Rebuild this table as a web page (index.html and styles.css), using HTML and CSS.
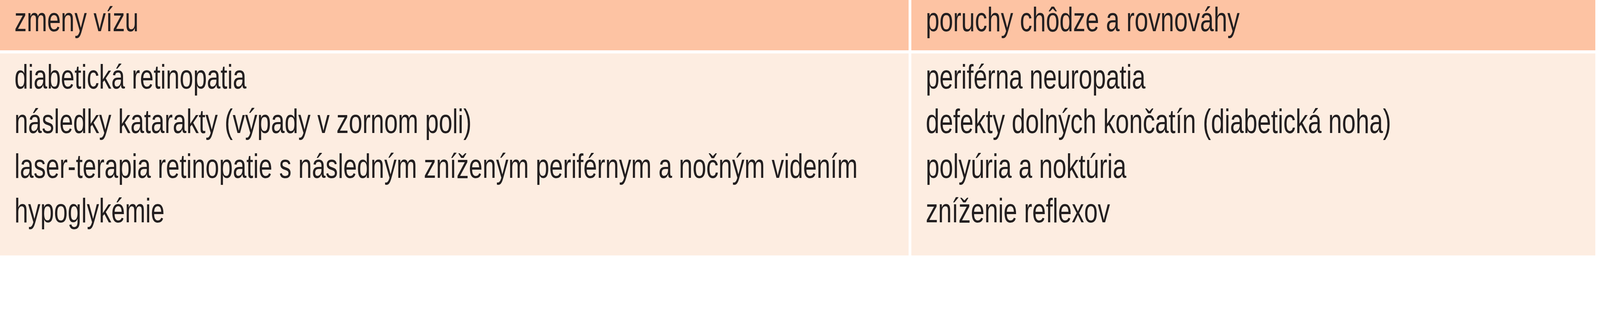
FILE: index.html
```html
<!DOCTYPE html>
<html lang="sk">
<head>
<meta charset="utf-8">
<title>Tabuľka</title>
<link rel="stylesheet" href="styles.css">
</head>
<body>
<div class="table">
  <div class="cell head"><span class="txt">zmeny vízu</span></div>
  <div class="cell head"><span class="txt">poruchy chôdze a rovnováhy</span></div>
  <div class="cell body">
    <div class="line"><span class="txt">diabetická retinopatia</span></div>
    <div class="line"><span class="txt">následky katarakty (výpady v zornom poli)</span></div>
    <div class="line"><span class="txt">laser-terapia retinopatie s následným zníženým periférnym a nočným videním</span></div>
    <div class="line"><span class="txt">hypoglykémie</span></div>
  </div>
  <div class="cell body">
    <div class="line"><span class="txt">periférna neuropatia</span></div>
    <div class="line"><span class="txt">defekty dolných končatín (diabetická noha)</span></div>
    <div class="line"><span class="txt">polyúria a noktúria</span></div>
    <div class="line"><span class="txt">zníženie reflexov</span></div>
  </div>
</div>
</body>
</html>
```

FILE: styles.css
```css
html, body {
  margin: 0;
  padding: 0;
  background: #ffffff;
}

.table {
  display: grid;
  grid-template-columns: 2834fr 2133fr;
  grid-template-rows: 129px 518px;
  column-gap: 0.16vw;
  row-gap: 8px;
  width: 99.7vw;
  font-family: "Liberation Sans", Arial, sans-serif;
  font-size: 88px;
  color: #231f20;
}

.cell {
  padding-left: 0.9vw;
  box-sizing: border-box;
  overflow: hidden;
  min-width: 0;
}

.head {
  background: #fdc3a3;
  line-height: 98px;
  padding-top: 1px;
}

.body {
  background: #fdede1;
  padding-top: 3px;
  line-height: 114.3px;
}

.line {
  white-space: nowrap;
}

.txt {
  display: inline-block;
  white-space: nowrap;
  transform-origin: 0 50%;
  transform: scaleX(0.714);
  transform: scaleX(calc(0.87 * 100vw / 4990px));
}
```
